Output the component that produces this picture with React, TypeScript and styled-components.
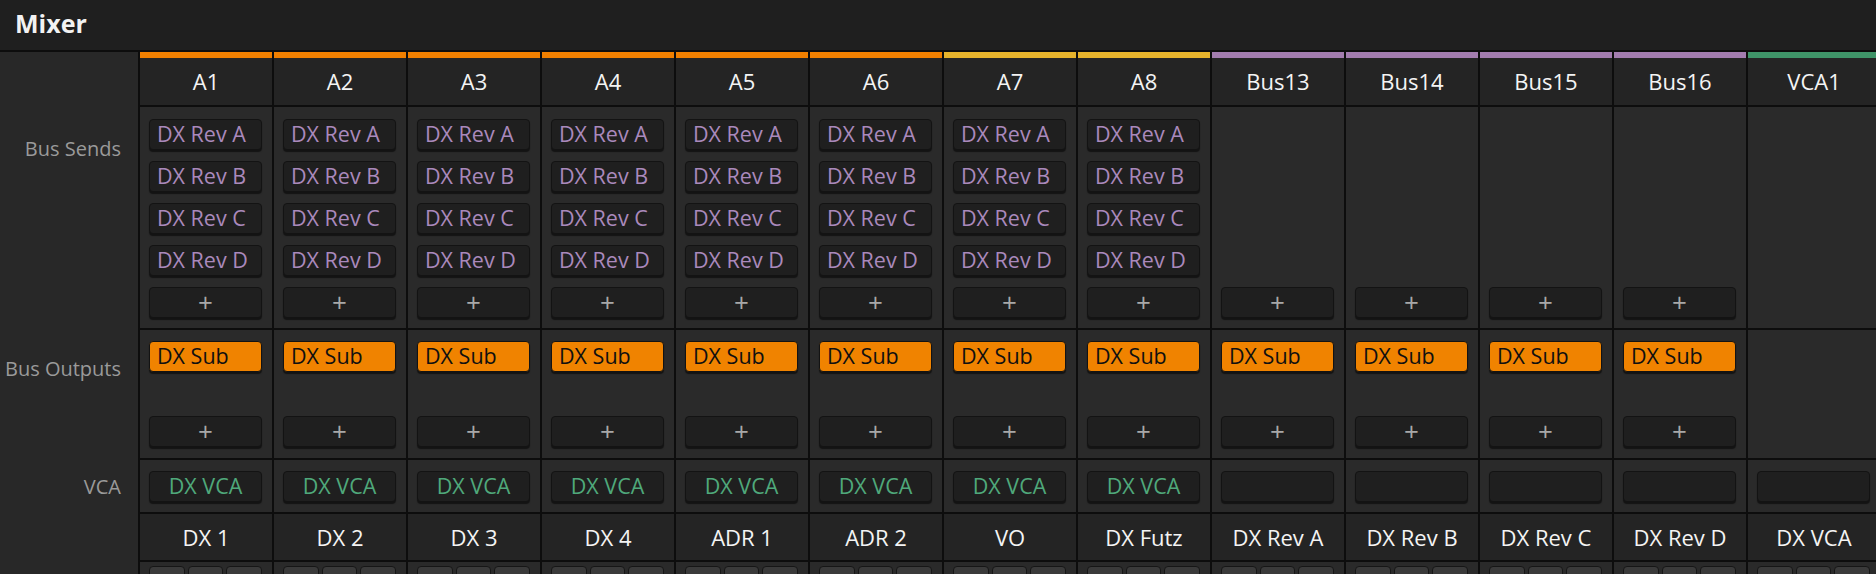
import styled, { createGlobalStyle } from "styled-components";

type BarColor = "orange" | "yellow" | "purple" | "green";

interface Channel {
  id: string;
  bar: BarColor;
  sends: string[];
  sendPlus: boolean;
  output: string | null;
  outputPlus: boolean;
  vca: string;
  track: string;
}

const BAR_COLORS: Record<BarColor, string> = {
  orange: "#f07f00",
  yellow: "#e6b32c",
  purple: "#a27cae",
  green: "#3f9468",
};

const SENDS = ["DX Rev A", "DX Rev B", "DX Rev C", "DX Rev D"];
const LINE = "#0d0d0d";

const audioChannel = (id: string, bar: BarColor, track: string): Channel => ({
  id,
  bar,
  sends: SENDS,
  sendPlus: true,
  output: "DX Sub",
  outputPlus: true,
  vca: "DX VCA",
  track,
});

const busChannel = (id: string, track: string): Channel => ({
  id,
  bar: "purple",
  sends: [],
  sendPlus: true,
  output: "DX Sub",
  outputPlus: true,
  vca: "",
  track,
});

const channels: Channel[] = [
  audioChannel("A1", "orange", "DX 1"),
  audioChannel("A2", "orange", "DX 2"),
  audioChannel("A3", "orange", "DX 3"),
  audioChannel("A4", "orange", "DX 4"),
  audioChannel("A5", "orange", "ADR 1"),
  audioChannel("A6", "orange", "ADR 2"),
  audioChannel("A7", "yellow", "VO"),
  audioChannel("A8", "yellow", "DX Futz"),
  busChannel("Bus13", "DX Rev A"),
  busChannel("Bus14", "DX Rev B"),
  busChannel("Bus15", "DX Rev C"),
  busChannel("Bus16", "DX Rev D"),
  { id: "VCA1", bar: "green", sends: [], sendPlus: false, output: null, outputPlus: false, vca: "", track: "DX VCA" },
];

const GlobalStyle = createGlobalStyle`
  * { box-sizing: border-box; }
  body {
    margin: 0;
    background: #282828;
    font-family: "Open Sans", "Noto Sans", sans-serif;
    -webkit-font-smoothing: antialiased;
  }
`;

const Page = styled.div`
  width: 1876px;
  height: 574px;
  overflow: hidden;
  background: #282828;
  display: flex;
  flex-direction: column;
`;

const TitleBar = styled.div`
  height: 52px;
  flex: 0 0 52px;
  background: #1f1f1f;
  border-bottom: 2px solid ${LINE};
  padding: 0 0 4px 15px;
  display: flex;
  align-items: center;
  color: #f2f2f2;
  font-size: 25px;
  font-weight: 700;
`;

const Body = styled.div`
  display: flex;
  flex: 1;
  min-height: 0;
`;

const LabelColumn = styled.div`
  flex: 0 0 140px;
  border-right: 2px solid ${LINE};
  background: #282828;
  display: flex;
  flex-direction: column;
`;

const LabelCell = styled.div<{ $h: number; $top?: number }>`
  height: ${(p) => p.$h}px;
  flex: 0 0 ${(p) => p.$h}px;
  padding: ${(p) => (p.$top === undefined ? "0" : `${p.$top}px`)} 17px 0 0;
  display: flex;
  justify-content: flex-end;
  align-items: ${(p) => (p.$top === undefined ? "center" : "flex-start")};
  color: #9a9a9a;
  font-size: 20px;
  line-height: 26px;
`;

const Strip = styled.div`
  flex: 0 0 134px;
  width: 134px;
  border-right: 2px solid ${LINE};
  display: flex;
  flex-direction: column;
  background: #2a2a2a;
`;

const ColorBar = styled.div<{ $color: string }>`
  height: 6px;
  flex: 0 0 6px;
  background: ${(p) => p.$color};
`;

const TitleCell = styled.div<{ $h: number }>`
  height: ${(p) => p.$h}px;
  flex: 0 0 ${(p) => p.$h}px;
  background: #242424;
  border-bottom: 2px solid ${LINE};
  display: flex;
  align-items: center;
  justify-content: center;
  color: #f4f4f4;
  font-size: 22px;
  padding-bottom: 1px;
  white-space: nowrap;
`;

const Section = styled.div<{ $h: number; $justify: string; $pt: number; $pb: number }>`
  height: ${(p) => p.$h}px;
  flex: 0 0 ${(p) => p.$h}px;
  border-bottom: 2px solid ${LINE};
  padding: ${(p) => p.$pt}px 10px ${(p) => p.$pb}px 9px;
  display: flex;
  flex-direction: column;
  justify-content: ${(p) => p.$justify};
  gap: 11px;
`;

type Variant = "send" | "plus" | "output" | "vca";

const SlotButton = styled.div<{ $variant: Variant }>`
  height: 31px;
  flex: 0 0 31px;
  border-radius: 4px;
  border: 1px solid #131313;
  box-shadow: 0 2px 1px rgba(0, 0, 0, 0.55);
  background: ${(p) => (p.$variant === "output" ? "#f08300" : "#1f1f1f")};
  color: ${(p) =>
    p.$variant === "send" ? "#aa89bc" : p.$variant === "vca" ? "#4fa97b" : p.$variant === "output" ? "#101010" : "#a8a8a8"};
  font-size: ${(p) => (p.$variant === "plus" ? "26px" : "21.5px")};
  line-height: 28px;
  display: flex;
  align-items: center;
  justify-content: ${(p) => (p.$variant === "send" || p.$variant === "output" ? "flex-start" : "center")};
  padding: 0 0 ${(p) => (p.$variant === "plus" ? "2px" : "1px")}
    ${(p) => (p.$variant === "send" || p.$variant === "output" ? "7px" : "0")};
  white-space: nowrap;
`;

const Footer = styled.div`
  flex: 1;
  padding: 4px 10px 0 9px;
  display: flex;
  gap: 3px;
`;

const MiniButton = styled.div`
  flex: 1;
  height: 24px;
  border-radius: 4px;
  background: #3a3a3a;
  border: 1px solid #161616;
`;

const ChannelStrip = ({ channel }: { channel: Channel }) => (
  <Strip>
    <ColorBar $color={BAR_COLORS[channel.bar]} />
    <TitleCell $h={49}>{channel.id}</TitleCell>
    <Section $h={223} $justify="flex-end" $pt={12} $pb={10}>
      {channel.sends.map((send) => (
        <SlotButton key={send} $variant="send">
          {send}
        </SlotButton>
      ))}
      {channel.sendPlus && <SlotButton $variant="plus">+</SlotButton>}
    </Section>
    <Section $h={130} $justify="space-between" $pt={11} $pb={11}>
      {channel.output && <SlotButton $variant="output">{channel.output}</SlotButton>}
      {channel.outputPlus && <SlotButton $variant="plus">+</SlotButton>}
    </Section>
    <Section $h={54} $justify="flex-start" $pt={11} $pb={10}>
      <SlotButton $variant="vca">{channel.vca}</SlotButton>
    </Section>
    <TitleCell $h={48}>{channel.track}</TitleCell>
    <Footer>
      <MiniButton />
      <MiniButton />
      <MiniButton />
    </Footer>
  </Strip>
);

const App = () => {
  return (
    <>
      <GlobalStyle />
      <Page>
        <TitleBar>Mixer</TitleBar>
        <Body>
          <LabelColumn>
            <LabelCell $h={55} />
            <LabelCell $h={223} $top={29}>
              Bus Sends
            </LabelCell>
            <LabelCell $h={130} $top={26}>
              Bus Outputs
            </LabelCell>
            <LabelCell $h={54}>VCA</LabelCell>
          </LabelColumn>
          {channels.map((channel) => (
            <ChannelStrip key={channel.id} channel={channel} />
          ))}
        </Body>
      </Page>
    </>
  );
};

export default App;
